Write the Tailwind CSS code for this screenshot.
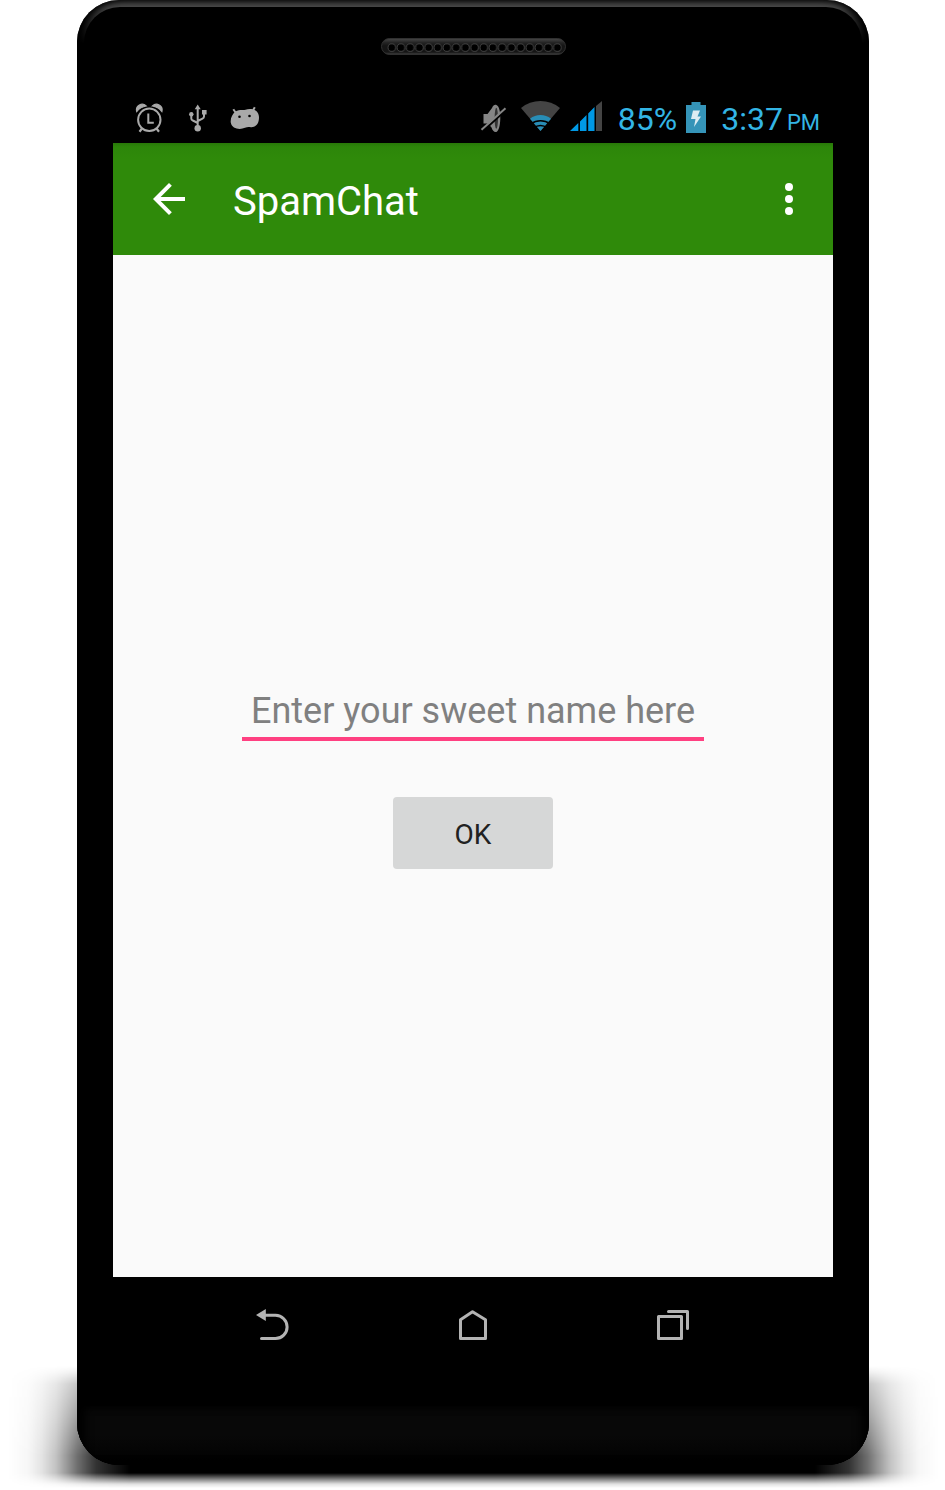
<!DOCTYPE html>
<html lang="en">
<head>
<meta charset="utf-8">
<meta name="viewport" content="width=device-width, initial-scale=1">
<title>SpamChat</title>
<script src="https://cdn.jsdelivr.net/npm/@tailwindcss/browser@4"></script>
</head>
<body class="bg-white font-['Roboto','Liberation_Sans',sans-serif]">
<div class="relative isolate flex min-h-screen flex-col overflow-hidden pr-[76px] pb-[25px] pl-[77px]">
  <!-- floor shadow -->
  <div class="absolute inset-x-0 bottom-[2px] -z-10 h-[122px] bg-[linear-gradient(to_right,transparent_8px,rgb(0_0_0/0.03)_28px,rgb(0_0_0/0.11)_42px,rgb(0_0_0/0.24)_56px,rgb(0_0_0/0.42)_68px,rgb(0_0_0/0.56)_77px,rgb(0_0_0/0.8)_96px,#000_130px,#000_calc(100%-130px),rgb(0_0_0/0.8)_calc(100%-96px),rgb(0_0_0/0.56)_calc(100%-77px),rgb(0_0_0/0.42)_calc(100%-68px),rgb(0_0_0/0.24)_calc(100%-55px),rgb(0_0_0/0.11)_calc(100%-41px),rgb(0_0_0/0.03)_calc(100%-26px),transparent_calc(100%-6px))] [mask-image:linear-gradient(to_bottom,transparent,rgb(0_0_0/0.1)_6px,rgb(0_0_0/0.4)_18px,rgb(0_0_0/0.65)_50px,#000_90px,#000_107px,rgb(0_0_0/0.5)_113px,rgb(0_0_0/0.12)_118px,transparent)]"></div>

  <div class="relative isolate flex flex-1 flex-col overflow-hidden rounded-[42px] bg-[linear-gradient(to_bottom,#484848,#484848_8px,#000_44px)] shadow-[inset_6px_0_7px_#000,inset_-6px_0_7px_#000]">
    <div class="absolute inset-x-0 top-[7px] bottom-0 -z-10 mx-[7px] rounded-t-[36px] bg-black"></div>

    <div class="flex h-[93px] justify-center pt-[38px]">
      <svg class="h-[17px] w-[185px]" viewBox="0 0 185 17" aria-hidden="true">
        <defs>
          <linearGradient id="grille" x1="0" y1="0" x2="0" y2="1"><stop offset="0" stop-color="#484848"/><stop offset=".25" stop-color="#252525"/><stop offset=".45" stop-color="#151515"/><stop offset=".85" stop-color="#151515"/><stop offset="1" stop-color="#444"/></linearGradient>
          <pattern id="holes" x="6" y="5" width="9.2" height="10" patternUnits="userSpaceOnUse"><circle cx="4.8" cy="4.6" r="3.8" fill="#000" stroke="#484848" stroke-width=".9"/></pattern>
        </defs>
        <rect x=".5" y=".5" width="184" height="16" rx="8" fill="url(#grille)" stroke="#303030"/>
        <rect x="6" y="5" width="174.8" height="10" fill="url(#holes)"/>
      </svg>
    </div>

    <div class="mx-9 flex h-[50px] items-center justify-between pr-[13px] pl-[22px] text-[32px] text-[#33b5e5]">
      <div class="flex items-center gap-[22px]">
        <svg class="h-[34px] w-[29px]" viewBox="135 101 29 34" fill="none" stroke="#a9a9a9" aria-label="Alarm">
          <circle cx="149.300" cy="119.800" r="11.200" stroke-width="2"/>
          <path d="M148.300 113.500v9.300h5.500" stroke-width="2"/>
          <path d="M142 128.500l-2.500 3.200M156.500 128.500l2.500 3.200" stroke-width="2.200"/>
          <path d="M136.700 111.500c-1.500-6 5.500-9.500 9.500-5.500a16 16 0 0 0-9.500 5.500zM161.900 111.500c1.500-6-5.500-9.500-9.500-5.500a16 16 0 0 1 9.500 5.500z" fill="#a9a9a9" stroke-width="1.200"/>
        </svg>
        <svg class="h-[34px] w-[22px]" viewBox="186 101 22 34" fill="none" stroke="#a9a9a9" aria-label="USB">
          <path d="M197.700 107v21M191.300 115v3.500q0 1.500 1.500 2l5 2.500M204 113v3.500q0 1.500-1.500 2.200l-4.800 2.300" stroke-width="2"/>
          <g fill="#a9a9a9" stroke="none"><path d="M197.700 104.500l3 4.700h-6z"/><circle cx="191.300" cy="114.200" r="2.200"/><path d="M202 110h4.600v4.500H202z"/><circle cx="197.700" cy="128.300" r="3.200"/></g>
        </svg>
        <svg class="h-[34px] w-[30px]" viewBox="230 101 30 34" fill="#a9a9a9" aria-label="Debugging">
          <path d="M233.300 109.200l3.500 5M254.800 107.300l-2.300 4" stroke="#a9a9a9" stroke-width="2"/>
          <path d="M235.500 111.500c4-2.500 7.500-1 10-1.800 5-2 13.500-.5 13.500 7.800 0 7-4 10-8 9.700-2-.2-3.500-.5-6 .6-5 2.200-13 1.300-14.200-5-.7-4.500 1.700-9 4.700-11.300z"/>
          <circle cx="239.500" cy="116.800" r="1.300" fill="#000"/><circle cx="249.500" cy="116" r="1.300" fill="#000"/>
        </svg>
      </div>
      <div class="flex items-center gap-2">
        <svg class="h-[34px] w-[32px]" viewBox="480 101 32 34" aria-label="Silent">
          <path d="M483.500 114h4l4.500-6c1-3 2.500-3.500 4-3.300 3.500 1 4.500 8 4.300 14-.2 7-1.800 13-4.300 13.300-2 .2-3.500-1.500-4.500-4.500l-3.500-4h-4.500z" fill="#858585"/>
          <ellipse cx="496.300" cy="118.300" rx="1.700" ry="10.500" fill="#333"/>
          <path d="M482.500 131.500l24-22" stroke="#000" stroke-width="2"/>
          <path d="M481.500 129.700l24-21.500" stroke="#858585" stroke-width="2"/>
        </svg>
        <svg class="h-[34px] w-[41px]" viewBox="520 101 41 34" aria-label="Wi-Fi">
          <path d="M540.500 131L521 108a31 31 0 0 1 39 0z" fill="#444"/>
          <path d="M540.500 131L530 118.700a17 17 0 0 1 21 0z" fill="#288db6"/>
          <path d="M531 123.800a16 16 0 0 1 19 0M534 128a9.500 9.500 0 0 1 13 0" fill="none" stroke="#000" stroke-width="1.500"/>
        </svg>
        <svg class="h-[34px] w-[41px]" viewBox="569 101 41 34" aria-label="Signal">
          <path d="M570 131l8.300-8v8zM580 131v-9.500l6.500-6.500v16zM588.200 131v-17.500l6.300-6.500v24z" fill="#0099e5"/>
          <path d="M596 131v-25l6-5v30z" fill="#444"/>
        </svg>
        <span class="pt-[2px]">85%</span>
        <svg class="h-[34px] w-[28px]" viewBox="686 101 28 34" aria-label="Charging">
          <path d="M692.500 102h9v3h5.500v28h-20v-28h5.500z" fill="#3594b8"/>
          <path d="M694 110.500h7l-2.500 6h3.500l-7 10.500 1.500-8h-4.500z" fill="#dcecf2"/>
        </svg>
        <span class="pt-[2px]">3:37<span class="ml-1 text-[22px]">PM</span></span>
      </div>
    </div>

    <header class="mx-9 flex h-28 items-center bg-[linear-gradient(to_bottom,#287808,#2d860a_4px,#2f8a0a_16px)] pr-5 pl-8 text-white">
      <button type="button" aria-label="Back"><svg class="size-12" viewBox="0 0 24 24" fill="currentColor"><path d="M20 11H7.830l5.590-5.590L12 4l-8 8 8 8 1.410-1.410L7.830 13H20z"/></svg></button>
      <h1 class="ml-10 flex-1 pt-[6px] text-[40px] leading-none">SpamChat</h1>
      <button type="button" aria-label="More options"><svg class="size-12" viewBox="0 0 24 24" fill="currentColor"><circle cx="12" cy="6" r="2"/><circle cx="12" cy="12" r="2"/><circle cx="12" cy="18" r="2"/></svg></button>
    </header>

    <main class="mx-9 flex flex-1 flex-col items-center justify-center gap-14 bg-[#fafafa]">
      <input type="text" aria-label="Name" placeholder="Enter your sweet name here" class="h-[78px] w-[462px] max-w-full border-b-4 border-[#ff4081] bg-transparent px-[9px] pt-[22px] text-[36px] text-[#212121] outline-none placeholder:text-[#808080]">
      <button type="button" class="h-[72px] w-40 rounded-sm bg-[#d6d7d7] pt-1 text-[28px] text-[#212121]">OK</button>
    </main>

    <nav class="flex h-24 items-center justify-center gap-[160px]" aria-label="System">
      <button type="button" aria-label="Back"><svg class="size-10" viewBox="253 1305 40 40" fill="none" stroke="#b3b3b3" stroke-width="3" stroke-linecap="round"><path d="M264 1315.300h11.500a11.600 11.600 0 0 1 0 23.200H261.500"/><path d="M256 1315l9.800-6v12z" fill="#b3b3b3" stroke="none"/></svg></button>
      <button type="button" aria-label="Home"><svg class="size-10" viewBox="453 1305 40 40" fill="none" stroke="#b3b3b3" stroke-width="3" stroke-linejoin="round"><path d="M460.500 1338.500v-18.700l12-8 13 8v18.700z"/></svg></button>
      <button type="button" aria-label="Recent apps"><svg class="size-10" viewBox="653 1305 40 40" fill="none" stroke="#b3b3b3" stroke-width="3" stroke-linejoin="round" stroke-linecap="round"><path d="M658.500 1316.500h23v22h-23zM668.500 1311.500h19v17"/></svg></button>
    </nav>
    <div class="mt-[33px] h-[59px] bg-[linear-gradient(to_bottom,#080808,#080808_50%,#010101)] shadow-[inset_8px_0_8px_#000,inset_-8px_0_8px_#000]"></div>
  </div>
</div>
</body>
</html>
